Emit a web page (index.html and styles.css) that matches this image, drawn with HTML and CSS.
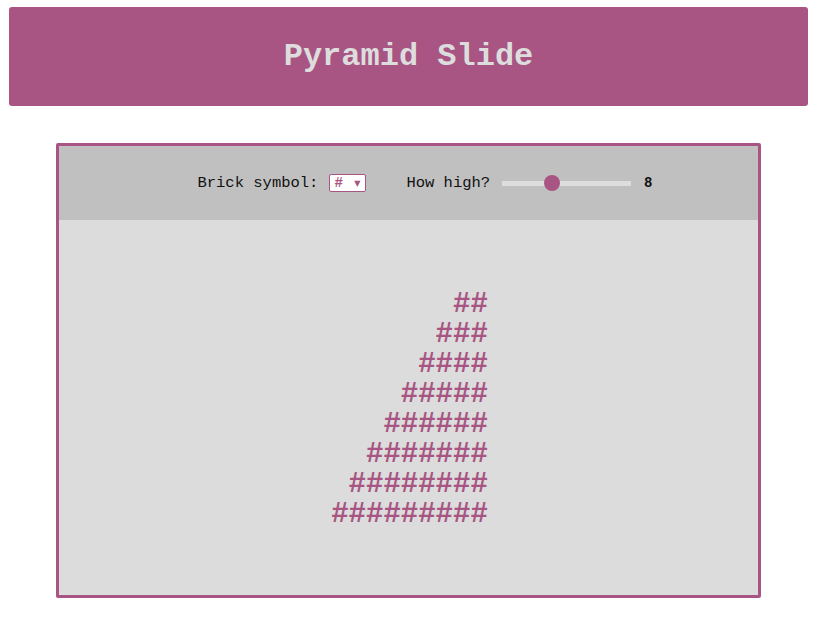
FILE: index.html
```html
<!DOCTYPE html>
<html>
<head>
<meta charset="utf-8">
<link rel="stylesheet" href="styles.css">
</head>
<body>
<header class="banner"><h1 class="title">Pyramid Slide</h1></header>
<main class="box">
  <div class="controls">
    <div class="label"><span class="text">Brick symbol:</span><span class="select"><span class="sel-val">#</span><span class="sel-arrow">▼</span></span></div>
    <div class="label"><span class="text">How high?</span><span class="slider"><span class="track"></span><span class="thumb"></span></span><span class="val">8</span></div>
  </div>
  <div class="stage">
    <div class="pyramid"><div class="row"><span class="sp">       </span>##</div><div class="row"><span class="sp">      </span>###</div><div class="row"><span class="sp">     </span>####</div><div class="row"><span class="sp">    </span>#####</div><div class="row"><span class="sp">   </span>######</div><div class="row"><span class="sp">  </span>#######</div><div class="row"><span class="sp"> </span>########</div><div class="row">#########</div></div>
  </div>
</main>
</body>
</html>
```
FILE: styles.css
```css
html, body { background: #fff; }
body { margin: 7px 12px 0 9px; font-family: "Liberation Mono", "Courier New", monospace; }
.banner { background: #a85583; border-radius: 3px; height: 99px; display: flex; align-items: center; justify-content: center; }
.title { margin: 0; color: #dddddd; font-family: "Liberation Mono", monospace; font-weight: bold; font-size: 32px; }
.box { width: 699px; margin: 37px auto 0; border: 3px solid #a85583; border-radius: 2px; background: #dcdcdc; }
.controls { background: #c0c0c0; height: 74px; display: flex; align-items: center; justify-content: center; gap: 40px; padding-left: 33px; font-size: 15.5px; color: #111; }
.label { display: flex; align-items: center; }
.text { white-space: pre; }
.select { display: inline-flex; align-items: center; justify-content: space-between; height: 16px; margin-left: 11px; border: 1px solid #a85583; border-radius: 2px; background: #fff; padding: 0 5px 0 4px; width: 26px; }
.sel-val { color: #a85583; font-size: 14px; font-weight: bold; }
.sel-arrow { color: #a85583; font-size: 8px; font-family: "DejaVu Sans", sans-serif; }
.slider { position: relative; width: 129px; height: 16px; margin-left: 12px; display: inline-block; }
.track { position: absolute; left: 0; right: 0; top: 6px; height: 5px; background: #dddddd; }
.thumb { position: absolute; left: 42px; top: 0; width: 16px; height: 16px; border-radius: 50%; background: #a85583; }
.val { margin-left: 13px; font-weight: bold; font-family: "Liberation Mono", monospace; font-size: 14px; }
.stage { height: 375px; display: flex; align-items: center; justify-content: center; box-sizing: border-box; padding-top: 4px; }
.pyramid { font-family: "Liberation Mono", monospace; font-weight: bold; font-size: 29px; line-height: 30px; color: #a85583; white-space: pre; margin-left: 2px; }
.sp { visibility: hidden; }
```
